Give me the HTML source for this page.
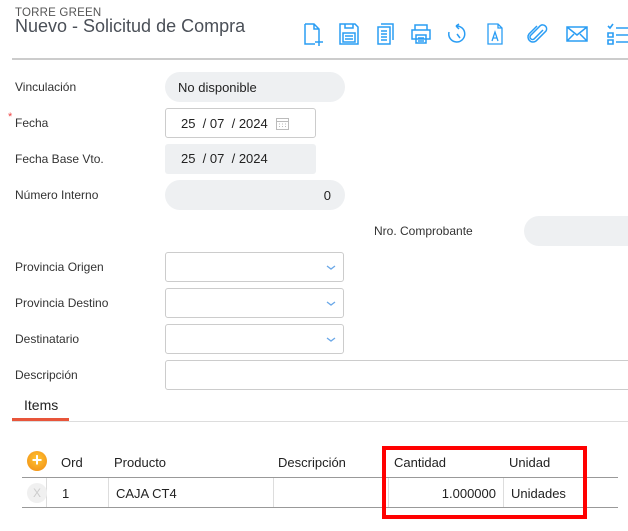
<!DOCTYPE html>
<html><head><meta charset="utf-8"><style>
*{margin:0;padding:0;box-sizing:border-box}
body{width:628px;height:531px;overflow:hidden;background:#fff;font-family:"Liberation Sans",sans-serif;color:#333;position:relative}
.a{position:absolute}
.lbl{position:absolute;left:15px;font-size:12px;color:#333}
.pill{position:absolute;background:#eef0f2;border-radius:15px;font-size:13px;color:#222}
.box{position:absolute;border:1px solid #ccc;border-radius:3px;background:#fff}
.sel .chev{position:absolute;right:6px;top:8px}
svg.ic{position:absolute;top:22px}
.th{position:absolute;top:455px;font-size:13px;color:#222}
.td{position:absolute;top:486px;font-size:13px;color:#222}
.vl{position:absolute;top:478px;height:29px;width:1px;background:#ddd}
</style></head><body>
<div class="a" style="left:15px;top:7px;font-size:11.5px;color:#555;letter-spacing:0.2px">TORRE GREEN</div>
<div class="a" style="left:15px;top:16px;font-size:18px;color:#4a4f57">Nuevo - Solicitud de Compra</div>

<svg class="ic" style="left:302px" width="24" height="24" viewBox="0 0 24 24" fill="none" stroke="#2a9df4" stroke-width="1.5"><path d="M3 2h9l5 5v9M3 2v20h10M12 2v5h5M17 16v8M13 20h8"/></svg>
<svg class="ic" style="left:337px" width="24" height="24" viewBox="0 0 24 24" fill="none" stroke="#2a9df4" stroke-width="1.5"><path d="M3 2h15l3 3v17H3zM8 2v4h8V2M6 11h12v9H6zM8 14h8M8 17h8"/></svg>
<svg class="ic" style="left:374px" width="24" height="24" viewBox="0 0 24 24" fill="none" stroke="#2a9df4" stroke-width="1.5"><path d="M7 2h12v16M4 5h12v17H4zM7 9h6M7 12h6M7 15h6M7 18h6"/></svg>
<svg class="ic" style="left:409px" width="24" height="24" viewBox="0 0 24 24" fill="none" stroke="#2a9df4" stroke-width="1.5"><path d="M6 8V3h12v5M3 8h18v9H3zM7 13h10v8H7zM9 16h6M9 19h6"/></svg>
<svg class="ic" style="left:446px" width="24" height="24" viewBox="0 0 24 24" fill="none" stroke="#2a9df4" stroke-width="1.5"><path d="M10 4a8 8 0 1 1-7 6M10 4l3-2M10 4l3 3M11 12l3 4"/></svg>
<svg class="ic" style="left:483px" width="24" height="24" viewBox="0 0 24 24" fill="none" stroke="#2a9df4" stroke-width="1.3"><path d="M5 2h10l4 4v16H5zM15 2v4h4M9 19l3-9 3 9M10 16h4"/></svg>
<svg class="ic" style="left:525px" width="24" height="24" viewBox="0 0 24 24" fill="none" stroke="#2a9df4" stroke-width="1.5"><path d="M18 8l-9 9a2.5 2.5 0 0 1-3.5-3.5l10-10a4 4 0 0 1 5.5 5.5l-10 10a5 5 0 0 1-7-7l8-8"/></svg>
<svg class="ic" style="left:565px" width="24" height="24" viewBox="0 0 24 24" fill="none" stroke="#2a9df4" stroke-width="1.5"><path d="M2 5h20v14H2zM2 5l10 8 10-8M2 19l7-7M22 19l-7-7"/></svg>
<svg class="ic" style="left:606px" width="24" height="24" viewBox="0 0 24 24" fill="none" stroke="#2a9df4" stroke-width="1.6"><path d="M2 4l2 2 3-4M2 11h5v4H2zM2 18h5v4H2zM10 6h12M10 13h12M10 20h12" stroke-width="1.6"/></svg>

<div class="a" style="left:12px;top:58px;width:616px;height:2px;background:#ccc"></div>

<div class="lbl" style="top:80px">Vinculación</div>
<div class="pill" style="left:165px;top:72px;width:180px;height:30px;padding:8px 13px">No disponible</div>

<div class="a" style="left:8px;top:111px;color:#e44;font-size:11px">*</div>
<div class="lbl" style="top:116px">Fecha</div>
<div class="box" style="left:165px;top:108px;width:151px;height:30px;font-size:13px;padding:7px 15px;color:#222">25&nbsp;&nbsp;/ 07&nbsp;&nbsp;/ 2024
<svg style="position:absolute;left:110px;top:8px" width="13" height="13" viewBox="0 0 13 13" fill="none" stroke="#bbb" stroke-width="1"><rect x="0.5" y="1.5" width="12" height="11"/><path d="M0.5 4.5h12M3 7h1M6 7h1M9 7h1M3 9.5h1M6 9.5h1M9 9.5h1"/></svg></div>

<div class="lbl" style="top:152px">Fecha Base Vto.</div>
<div class="a" style="left:165px;top:144px;width:151px;height:30px;background:#eef0f2;border-radius:3px;font-size:13px;padding:7px 16px;color:#222">25&nbsp;&nbsp;/ 07&nbsp;&nbsp;/ 2024</div>

<div class="lbl" style="top:188px">Número Interno</div>
<div class="pill" style="left:165px;top:180px;width:180px;height:30px;padding:8px 14px;text-align:right">0</div>

<div class="a" style="left:374px;top:224px;font-size:12px;color:#333">Nro. Comprobante</div>
<div class="a" style="left:524px;top:216px;width:120px;height:30px;background:#eef0f2;border-radius:15px"></div>

<div class="lbl" style="top:260px">Provincia Origen</div>
<div class="box sel" style="left:165px;top:252px;width:179px;height:30px"><svg class="chev" width="12" height="12" viewBox="0 0 12 12"><path d="M2 5l4 3 4-3" fill="none" stroke="#6aa8e8" stroke-width="1.3"/></svg></div>
<div class="lbl" style="top:296px">Provincia Destino</div>
<div class="box sel" style="left:165px;top:288px;width:179px;height:30px"><svg class="chev" width="12" height="12" viewBox="0 0 12 12"><path d="M2 5l4 3 4-3" fill="none" stroke="#6aa8e8" stroke-width="1.3"/></svg></div>
<div class="lbl" style="top:332px">Destinatario</div>
<div class="box sel" style="left:165px;top:324px;width:179px;height:30px"><svg class="chev" width="12" height="12" viewBox="0 0 12 12"><path d="M2 5l4 3 4-3" fill="none" stroke="#6aa8e8" stroke-width="1.3"/></svg></div>
<div class="lbl" style="top:368px">Descripción</div>
<div class="box" style="left:165px;top:360px;width:470px;height:30px"></div>

<div class="a" style="left:24px;top:397px;font-size:14px;color:#222">Items</div>
<div class="a" style="left:12px;top:421px;width:616px;height:1px;background:#ddd"></div>
<div class="a" style="left:12px;top:418px;width:57px;height:3px;background:#e8553a"></div>

<div class="a" style="left:27px;top:451px;width:20px;height:20px;border-radius:50%;background:radial-gradient(circle at 50% 40%,#ffc533,#f08a12);color:#fff;font-size:18px;line-height:19px;text-align:center;font-weight:bold">+</div>
<div class="th" style="left:61px">Ord</div>
<div class="th" style="left:114px">Producto</div>
<div class="th" style="left:278px">Descripción</div>
<div class="th" style="left:394px">Cantidad</div>
<div class="th" style="left:509px">Unidad</div>
<div class="a" style="left:22px;top:477px;width:596px;height:1px;background:#999"></div>
<div class="a" style="left:22px;top:507px;width:596px;height:1px;background:#999"></div>
<div class="vl" style="left:46px"></div><div class="vl" style="left:108px"></div><div class="vl" style="left:273px"></div><div class="vl" style="left:388px"></div><div class="vl" style="left:503px"></div>
<div class="a" style="left:27px;top:483px;width:20px;height:20px;border-radius:50%;background:#f0f0f0;color:#ccc;font-size:12px;line-height:20px;text-align:center">X</div>
<div class="td" style="left:62px">1</div>
<div class="td" style="left:116px">CAJA CT4</div>
<div class="td" style="left:388px;width:108px;text-align:right">1.000000</div>
<div class="td" style="left:511px">Unidades</div>

<div class="a" style="left:382px;top:446px;width:205px;height:73px;border:4px solid #f00"></div>
</body></html>
